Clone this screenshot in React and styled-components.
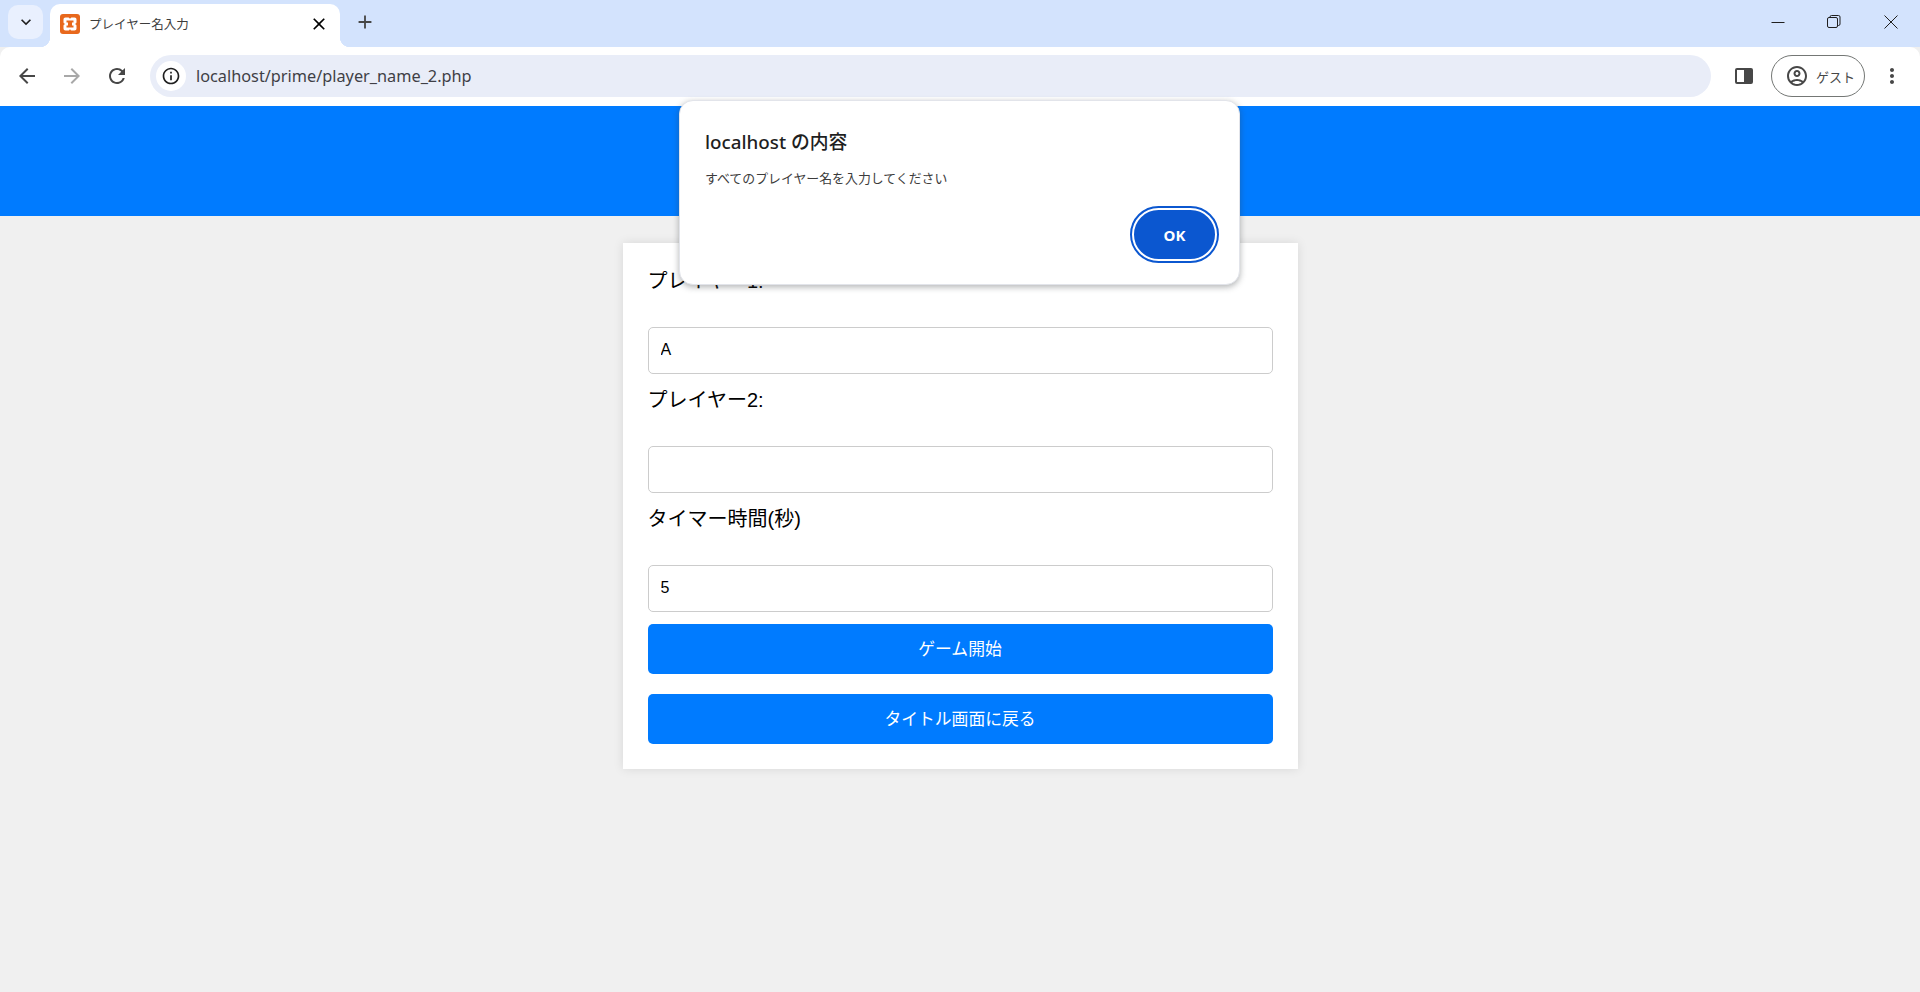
import React from 'react';
import styled, { createGlobalStyle } from 'styled-components';

const GlobalStyles = createGlobalStyle`
  html, body {
    margin: 0;
    padding: 0;
    height: 100%;
    background: #f0f0f0;
  }
  * {
    box-sizing: border-box;
  }
`;

const uiFont = `"Noto Sans", "Noto Sans CJK JP", sans-serif`;
const pageFont = `"Liberation Sans", "Noto Sans CJK JP", sans-serif`;

const Screen = styled.div`
  position: relative;
  width: 1920px;
  height: 992px;
  overflow: hidden;
  background: #f0f0f0;
  display: flex;
  flex-direction: column;
`;

const TabStrip = styled.div`
  height: 47px;
  flex: none;
  background: #d3e3fd;
  display: flex;
  align-items: flex-start;
  padding: 5px 0 0 8px;
`;

const TabSearch = styled.div`
  width: 35px;
  height: 34px;
  border-radius: 10px;
  background: #e9f0fe;
  display: flex;
  align-items: center;
  justify-content: center;
  color: #1f1f1f;
`;

const Tab = styled.div`
  position: relative;
  width: 290px;
  height: 43px;
  margin: -1px 0 0 7px;
  padding: 0 11px 4px 10px;
  background: #fff;
  border-radius: 10px 10px 0 0;
  display: flex;
  align-items: center;
  &::before,
  &::after {
    content: '';
    position: absolute;
    bottom: 0;
    width: 10px;
    height: 10px;
  }
  &::before {
    left: -10px;
    background: radial-gradient(circle at 0 0, transparent 10px, #fff 10.5px);
  }
  &::after {
    right: -10px;
    background: radial-gradient(circle at 100% 0, transparent 10px, #fff 10.5px);
  }
`;

const TabTitle = styled.span`
  flex: 1;
  margin-left: 9px;
  font: 12.5px ${uiFont};
  color: #3c3c3c;
  white-space: nowrap;
`;

const NewTab = styled.div`
  width: 28px;
  height: 34px;
  margin-left: 11px;
  display: flex;
  align-items: center;
  justify-content: center;
  color: #474747;
`;

const WindowControls = styled.div`
  margin-left: auto;
  margin-top: -5px;
  display: flex;
  height: 44px;
`;

const WindowButton = styled.div`
  width: ${p => p.$width || 56}px;
  display: flex;
  align-items: center;
  justify-content: center;
  color: #1f1f1f;
`;

const Toolbar = styled.div`
  height: 59px;
  flex: none;
  background: #fff;
  border-radius: 10px 10px 0 0;
  display: flex;
  align-items: center;
  padding: 0 0 1px 15px;
  color: #474747;
`;

const NavButton = styled.div`
  width: 24px;
  height: 24px;
  margin-right: 21px;
  display: flex;
  align-items: center;
  justify-content: center;
  color: ${p => (p.$disabled ? '#a8a8a8' : '#474747')};
`;

const Omnibox = styled.div`
  width: 1561px;
  height: 42px;
  border-radius: 21px;
  background: #e9edf8;
  display: flex;
  align-items: center;
  padding-left: 6px;
`;

const SiteInfo = styled.div`
  width: 30px;
  height: 30px;
  border-radius: 50%;
  background: #fff;
  display: flex;
  align-items: center;
  justify-content: center;
  color: #1f1f1f;
`;

const Url = styled.span`
  margin-left: 10px;
  font: 16.3px ${uiFont};
  color: #3f3f46;
`;

const PanelButton = styled.div`
  width: 18px;
  height: 16px;
  margin-left: 24px;
  border: 2px solid #474747;
  border-radius: 2px;
  display: flex;
  justify-content: flex-end;
  &::after {
    content: '';
    width: 7px;
    background: #474747;
  }
`;

const GuestChip = styled.div`
  width: 94px;
  height: 42px;
  margin-left: 18px;
  border: 1px solid #747775;
  border-radius: 21px;
  display: flex;
  align-items: center;
  padding-left: 13px;
  gap: 7px;
  font: 13px ${uiFont};
  color: #474747;
`;

const MoreButton = styled.div`
  margin-left: 15px;
  width: 24px;
  display: flex;
  justify-content: center;
`;

const Banner = styled.div`
  height: 110px;
  flex: none;
  background: #007bff;
`;

const Main = styled.main`
  display: flex;
  justify-content: center;
  padding-top: 27px;
`;

const Card = styled.form`
  width: 675px;
  height: 526px;
  padding: 20px 25px 0;
  background: #fff;
  box-shadow: 0 0 10px rgba(0, 0, 0, 0.1);
  font-family: ${pageFont};
`;

const Label = styled.label`
  display: block;
  height: 64px;
  font-size: 20px;
  line-height: 37px;
  color: #000;
`;

const Input = styled.input`
  display: block;
  width: 100%;
  height: 47px;
  margin-bottom: ${p => p.$gap || 8}px;
  padding: 0 12px 1px;
  border: 1px solid #ccc;
  border-radius: 5px;
  background: #fff;
  font: 16px ${pageFont};
  color: #000;
  outline: none;
`;

const Button = styled.button`
  display: block;
  width: 100%;
  height: 50px;
  margin-bottom: 20px;
  padding: 0 0 2px;
  border: 0;
  border-radius: 5px;
  background: #007bff;
  color: #fff;
  font: 16.8px ${pageFont};
`;

const AlertBox = styled.div`
  position: absolute;
  left: 679px;
  top: 100px;
  width: 561px;
  height: 185px;
  padding: 27px 22px 0 25px;
  background: #fff;
  border: 1px solid #e2e4ea;
  border-radius: 14px;
  box-shadow: 0 2px 6px rgba(60, 64, 67, 0.4);
`;

const AlertTitle = styled.div`
  font: 500 18.8px/28px ${uiFont};
  color: #1f1f1f;
`;

const AlertMessage = styled.div`
  margin-top: 12px;
  font: 12.9px/20px ${uiFont};
  color: #3c3c3c;
`;

const AlertActions = styled.div`
  display: flex;
  justify-content: flex-end;
  margin-top: 20px;
`;

const OkButton = styled.button`
  width: 85px;
  height: 53px;
  border: 2px solid #fff;
  outline: 2px solid #0b57d0;
  outline-offset: 0;
  border-radius: 27px;
  background: #0b57d0;
  color: #fff;
  font: 700 15px ${uiFont};
`;

const Xampp = () => (
  <svg width="20" height="20" viewBox="0 0 20 20">
    <rect width="20" height="20" rx="3" fill="#e8681c" />
    <path
      d="M5.500 3.500h2.500c1 0 1.500.5 2 1.500.5-1 1-1.500 2-1.500h2.500c1.200 0 2 .8 2 2V8c0 1-.5 1.500-1.500 2 1 .5 1.500 1 1.500 2v2.500c0 1.200-.8 2-2 2H12c-1 0-1.500-.5-2-1.500-.5 1-1 1.500-2 1.500H5.500c-1.200 0-2-.8-2-2V12c0-1 .5-1.500 1.500-2-1-.5-1.500-1-1.500-2V5.500c0-1.200.8-2 2-2z"
      fill="#fff"
    />
    <path d="M6.500 6.500h7v2h-1.500v3h1.500v2h-7v-2H8v-3H6.500z" fill="#e8681c" />
  </svg>
);

const Icon = ({ d, size = 24 }) => (
  <svg width={size} height={size} viewBox="0 0 24 24" fill="currentColor">
    <path d={d} />
  </svg>
);

const paths = {
  back: 'M20 11H7.83l5.59-5.59L12 4l-8 8 8 8 1.41-1.41L7.83 13H20v-2z',
  forward: 'M12 4l-1.41 1.41L16.17 11H4v2h12.17l-5.58 5.59L12 20l8-8z',
  reload:
    'M17.65 6.35A7.958 7.958 0 0 0 12 4c-4.42 0-7.99 3.58-7.99 8s3.57 8 7.99 8c3.73 0 6.84-2.55 7.73-6h-2.08A5.99 5.99 0 0 1 12 18c-3.31 0-6-2.69-6-6s2.69-6 6-6c1.66 0 3.14.69 4.22 1.78L13 11h7V4l-2.35 2.35z',
  chevron: 'M7.41 8.59 12 13.17l4.59-4.58L18 10l-6 6-6-6z',
  close: 'M19 6.41 17.59 5 12 10.59 6.41 5 5 6.41 10.59 12 5 17.59 6.41 19 12 13.41 17.59 19 19 17.59 13.41 12z',
  plus: 'M19 13h-6v6h-2v-6H5v-2h6V5h2v6h6v2z',
  info:
    'M11 7h2v2h-2zm0 4h2v6h-2zm1-9C6.480 2 2 6.480 2 12s4.480 10 10 10 10-4.480 10-10S17.520 2 12 2zm0 18c-4.410 0-8-3.590-8-8s3.590-8 8-8 8 3.590 8 8-3.590 8-8 8z',
  account:
    'M12 2C6.480 2 2 6.480 2 12s4.480 10 10 10 10-4.480 10-10S17.520 2 12 2zM7.350 18.500C8.660 17.560 10.260 17 12 17s3.340.56 4.650 1.500C15.340 19.440 13.740 20 12 20s-3.340-.56-4.650-1.500zm10.790-1.380C16.450 15.800 14.320 15 12 15s-4.450.8-6.140 2.120A7.960 7.960 0 0 1 4 12c0-4.420 3.580-8 8-8s8 3.580 8 8c0 1.950-.7 3.730-1.860 5.120zM12 6c-1.930 0-3.500 1.570-3.500 3.500S10.070 13 12 13s3.500-1.570 3.500-3.500S13.930 6 12 6zm0 5c-.83 0-1.500-.67-1.500-1.500S11.170 8 12 8s1.500.67 1.500 1.500S12.830 11 12 11z',
  more:
    'M12 8c1.100 0 2-.9 2-2s-.9-2-2-2-2 .9-2 2 .9 2 2 2zm0 2c-1.100 0-2 .9-2 2s.9 2 2 2 2-.9 2-2-.9-2-2-2zm0 6c-1.100 0-2 .9-2 2s.9 2 2 2 2-.9 2-2-.9-2-2-2z',
};

function App() {
  return (
    <Screen>
      <GlobalStyles />
      <TabStrip>
        <TabSearch>
          <Icon d={paths.chevron} size={20} />
        </TabSearch>
        <Tab>
          <Xampp />
          <TabTitle>プレイヤー名入力</TabTitle>
          <Icon d={paths.close} size={20} />
        </Tab>
        <NewTab>
          <Icon d={paths.plus} size={22} />
        </NewTab>
        <WindowControls>
          <WindowButton>
            <svg width="14" height="14" viewBox="0 0 14 14" fill="none" stroke="currentColor">
              <path d="M0.500 7.500h13" />
            </svg>
          </WindowButton>
          <WindowButton>
            <svg width="14" height="14" viewBox="0 0 14 14" fill="none" stroke="currentColor">
              <rect x="0.500" y="2.500" width="10" height="10" rx="1.500" />
              <path d="M3 2.500V2a1.500 1.500 0 0 1 1.500-1.500h7A1.500 1.500 0 0 1 13 2v7a1.500 1.500 0 0 1-1.500 1.500H11" />
            </svg>
          </WindowButton>
          <WindowButton $width={58}>
            <svg width="14" height="14" viewBox="0 0 14 14" fill="none" stroke="currentColor">
              <path d="M0.500 0.500l13 13M13.500 0.500l-13 13" />
            </svg>
          </WindowButton>
        </WindowControls>
      </TabStrip>
      <Toolbar>
        <NavButton>
          <Icon d={paths.back} />
        </NavButton>
        <NavButton $disabled>
          <Icon d={paths.forward} />
        </NavButton>
        <NavButton>
          <Icon d={paths.reload} />
        </NavButton>
        <Omnibox>
          <SiteInfo>
            <Icon d={paths.info} size={20} />
          </SiteInfo>
          <Url>localhost/prime/player_name_2.php</Url>
        </Omnibox>
        <PanelButton />
        <GuestChip>
          <Icon d={paths.account} />
          ゲスト
        </GuestChip>
        <MoreButton>
          <Icon d={paths.more} />
        </MoreButton>
      </Toolbar>
      <Banner />
      <Main>
        <Card>
          <Label>プレイヤー1:</Label>
          <Input defaultValue="A" />
          <Label>プレイヤー2:</Label>
          <Input />
          <Label>タイマー時間(秒)</Label>
          <Input defaultValue="5" $gap={12} />
          <Button type="button">ゲーム開始</Button>
          <Button type="button">タイトル画面に戻る</Button>
        </Card>
      </Main>
      <AlertBox>
        <AlertTitle>localhost の内容</AlertTitle>
        <AlertMessage>すべてのプレイヤー名を入力してください</AlertMessage>
        <AlertActions>
          <OkButton type="button">OK</OkButton>
        </AlertActions>
      </AlertBox>
    </Screen>
  );
}

export default App;
